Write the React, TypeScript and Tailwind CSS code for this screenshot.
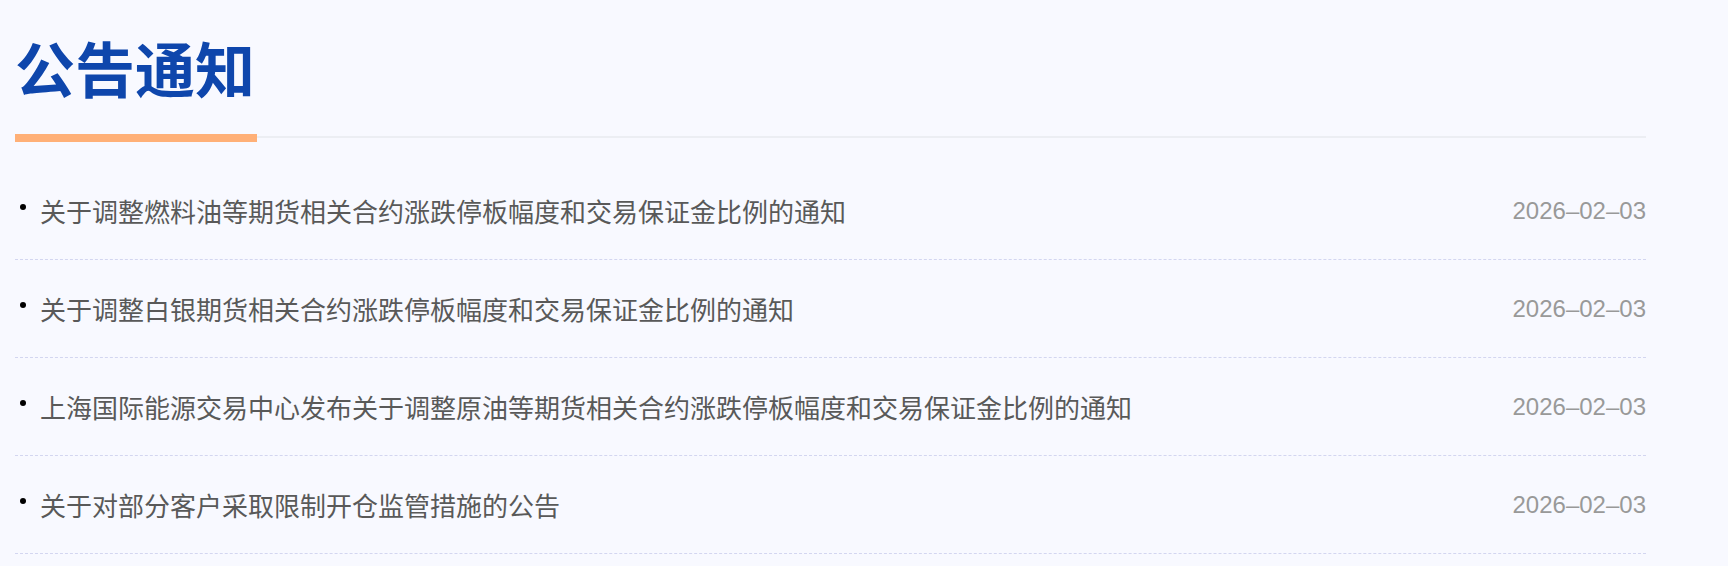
const NOTICES = [
  { title: '关于调整燃料油等期货相关合约涨跌停板幅度和交易保证金比例的通知', date: '2026–02–03' },
  { title: '关于调整白银期货相关合约涨跌停板幅度和交易保证金比例的通知', date: '2026–02–03' },
  { title: '上海国际能源交易中心发布关于调整原油等期货相关合约涨跌停板幅度和交易保证金比例的通知', date: '2026–02–03' },
  { title: '关于对部分客户采取限制开仓监管措施的公告', date: '2026–02–03' },
];

export default function App() {
  return (
    <div
      className="min-h-screen w-full bg-[#f8f9ff] pl-[15px]"
      style={{ fontFamily: '"Noto Sans CJK SC", "Noto Sans", sans-serif' }}
    >
      <div className="w-[1631px]">
        {/* Header */}
        <div className="relative border-b-2 border-[#eceef3] pt-[37px] pb-[39px]">
          <h2 className="text-[60px] leading-none font-bold text-[#0e46ac]">公告通知</h2>
          <span className="absolute left-0 -bottom-[6px] h-[8px] w-[242px] bg-[#ffb077]" />
        </div>

        {/* List */}
        <ul className="mt-[24px]">
          {NOTICES.map((n, i) => (
            <li
              key={i}
              className="flex h-[98px] items-center justify-between border-b border-dashed border-[#d3d6f0]"
            >
              <div className="flex items-center">
                <span className="ml-[5px] mb-[8px] h-[6px] w-[6px] rounded-full bg-black" />
                <span className="ml-[14px] text-[26px] leading-none text-[#595959]">{n.title}</span>
              </div>
              <span
                className="text-[24px] leading-none text-[#999999]"
                style={{ fontFamily: '"Liberation Sans", "Noto Sans CJK SC", sans-serif' }}
              >
                {n.date}
              </span>
            </li>
          ))}
        </ul>
      </div>
    </div>
  );
}
